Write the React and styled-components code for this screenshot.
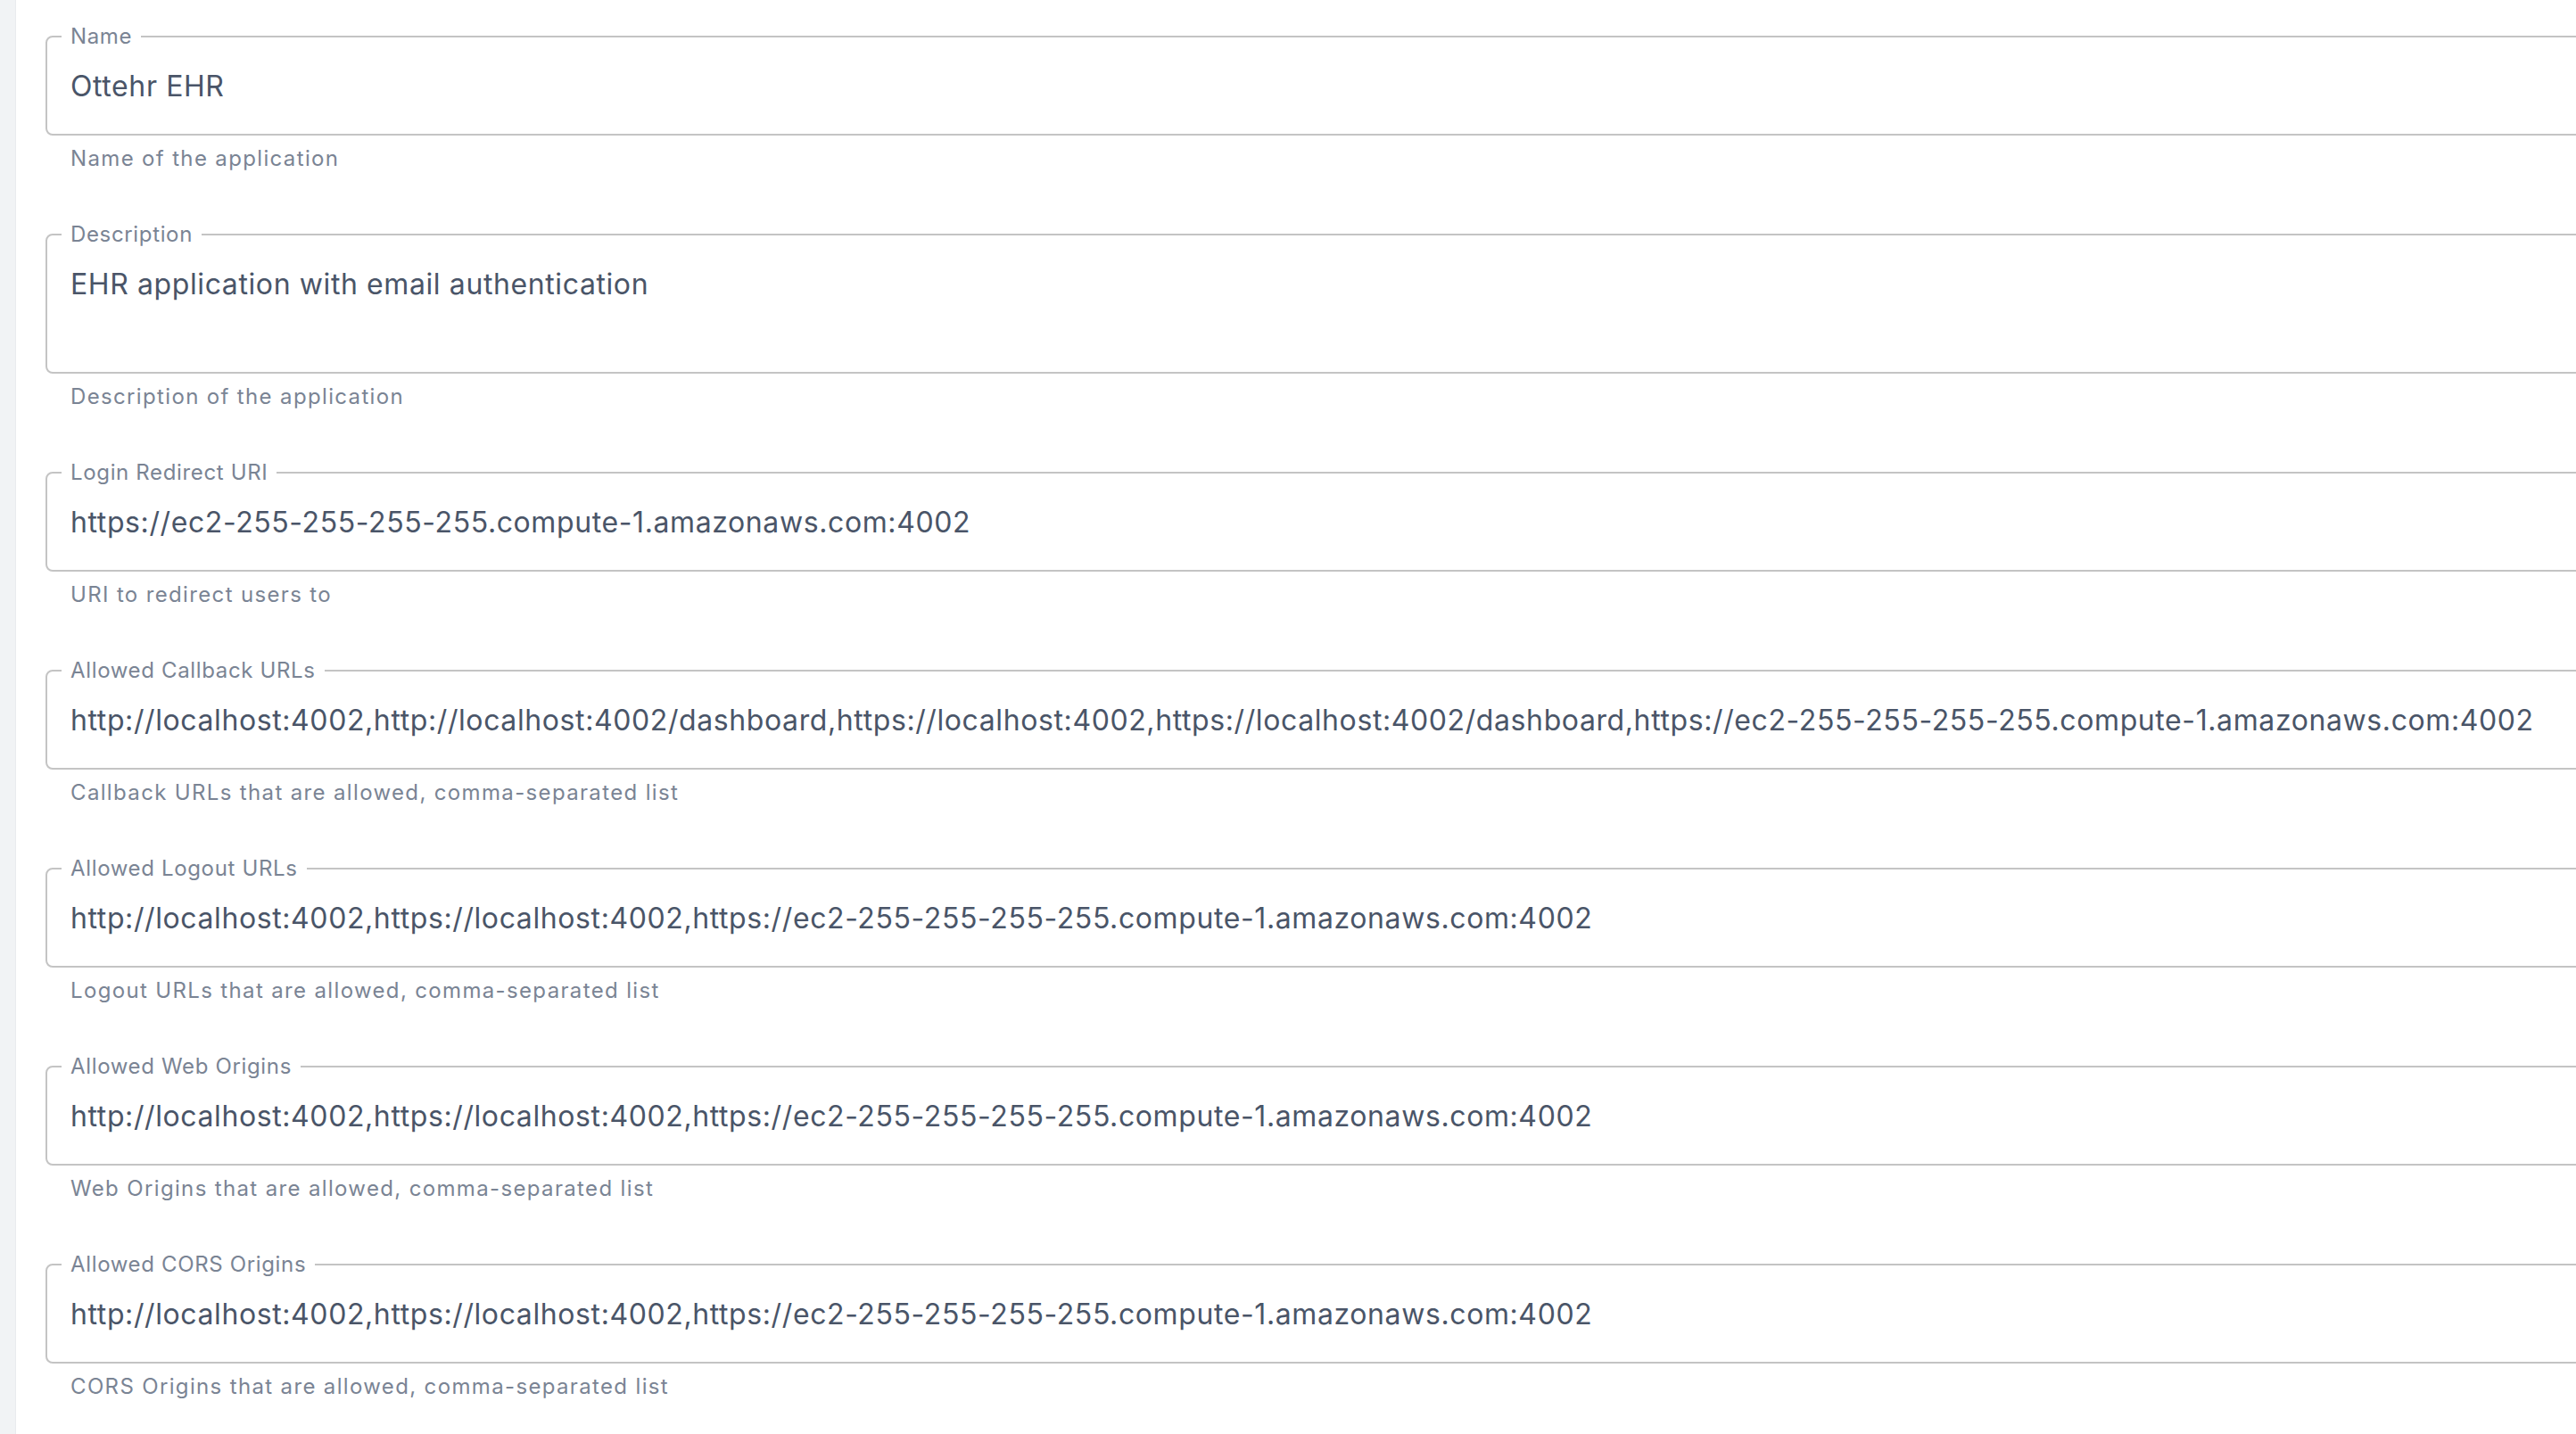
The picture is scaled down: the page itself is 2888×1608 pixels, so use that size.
import React from 'react';
import styled, { createGlobalStyle } from 'styled-components';

const GlobalStyle = createGlobalStyle`
  html, body {
    margin: 0;
    padding: 0;
    background: #ffffff;
    overflow: hidden;
  }
  body {
    font-family: Inter, "Open Sans", sans-serif;
    -webkit-font-smoothing: antialiased;
  }
`;

const Page = styled.div`
  display: flex;
  min-height: 100vh;
`;

const SideStrip = styled.div`
  flex: 0 0 17px;
  background: #f1f3f5;
  border-right: 1px solid #e9ebee;
`;

const Main = styled.main`
  flex: 1;
  min-width: 0;
  overflow: hidden;
  padding: 29px 0 0 33px;
`;

const Form = styled.form`
  width: calc(100% + 200px);
  display: flex;
  flex-direction: column;
`;

const FieldBlock = styled.div`
  margin-bottom: 53px;
`;

const Box = styled.fieldset`
  margin: 0;
  padding: 0 16px;
  border: 2px solid #c4c4c4;
  border-radius: 8px;
  min-width: 0;
`;

const Legend = styled.legend`
  padding: 0 10px;
  font-size: 24px;
  line-height: 24px;
  color: #7a8494;
  letter-spacing: 0.65px;
`;

const Value = styled.div`
  padding: 21px 10px ${(p) => 30 + (p.$rows - 1) * 45}px;
  font-size: 32px;
  line-height: 46px;
  color: #4a5568;
  letter-spacing: 0.6px;
  white-space: nowrap;
`;

const Helper = styled.p`
  margin: 6px 0 0;
  padding-left: 28px;
  font-size: 24px;
  line-height: 40px;
  color: #7a8494;
  letter-spacing: 1.35px;
`;

const fields = [
  {
    label: 'Name',
    value: 'Ottehr EHR',
    help: 'Name of the application',
  },
  {
    label: 'Description',
    value: 'EHR application with email authentication',
    help: 'Description of the application',
    rows: 2,
  },
  {
    label: 'Login Redirect URI',
    value: 'https://ec2-255-255-255-255.compute-1.amazonaws.com:4002',
    help: 'URI to redirect users to',
  },
  {
    label: 'Allowed Callback URLs',
    value:
      'http://localhost:4002,http://localhost:4002/dashboard,https://localhost:4002,https://localhost:4002/dashboard,https://ec2-255-255-255-255.compute-1.amazonaws.com:4002',
    help: 'Callback URLs that are allowed, comma-separated list',
  },
  {
    label: 'Allowed Logout URLs',
    value: 'http://localhost:4002,https://localhost:4002,https://ec2-255-255-255-255.compute-1.amazonaws.com:4002',
    help: 'Logout URLs that are allowed, comma-separated list',
  },
  {
    label: 'Allowed Web Origins',
    value: 'http://localhost:4002,https://localhost:4002,https://ec2-255-255-255-255.compute-1.amazonaws.com:4002',
    help: 'Web Origins that are allowed, comma-separated list',
  },
  {
    label: 'Allowed CORS Origins',
    value: 'http://localhost:4002,https://localhost:4002,https://ec2-255-255-255-255.compute-1.amazonaws.com:4002',
    help: 'CORS Origins that are allowed, comma-separated list',
  },
];

const Field = ({ label, value, help, rows = 1 }) => (
  <FieldBlock>
    <Box>
      <Legend>{label}</Legend>
      <Value $rows={rows}>{value}</Value>
    </Box>
    <Helper>{help}</Helper>
  </FieldBlock>
);

const App = () => {
  return (
    <>
      <GlobalStyle />
      <Page>
        <SideStrip />
        <Main>
          <Form>
            {fields.map((f) => (
              <Field key={f.label} {...f} />
            ))}
          </Form>
        </Main>
      </Page>
    </>
  );
};

export default App;
